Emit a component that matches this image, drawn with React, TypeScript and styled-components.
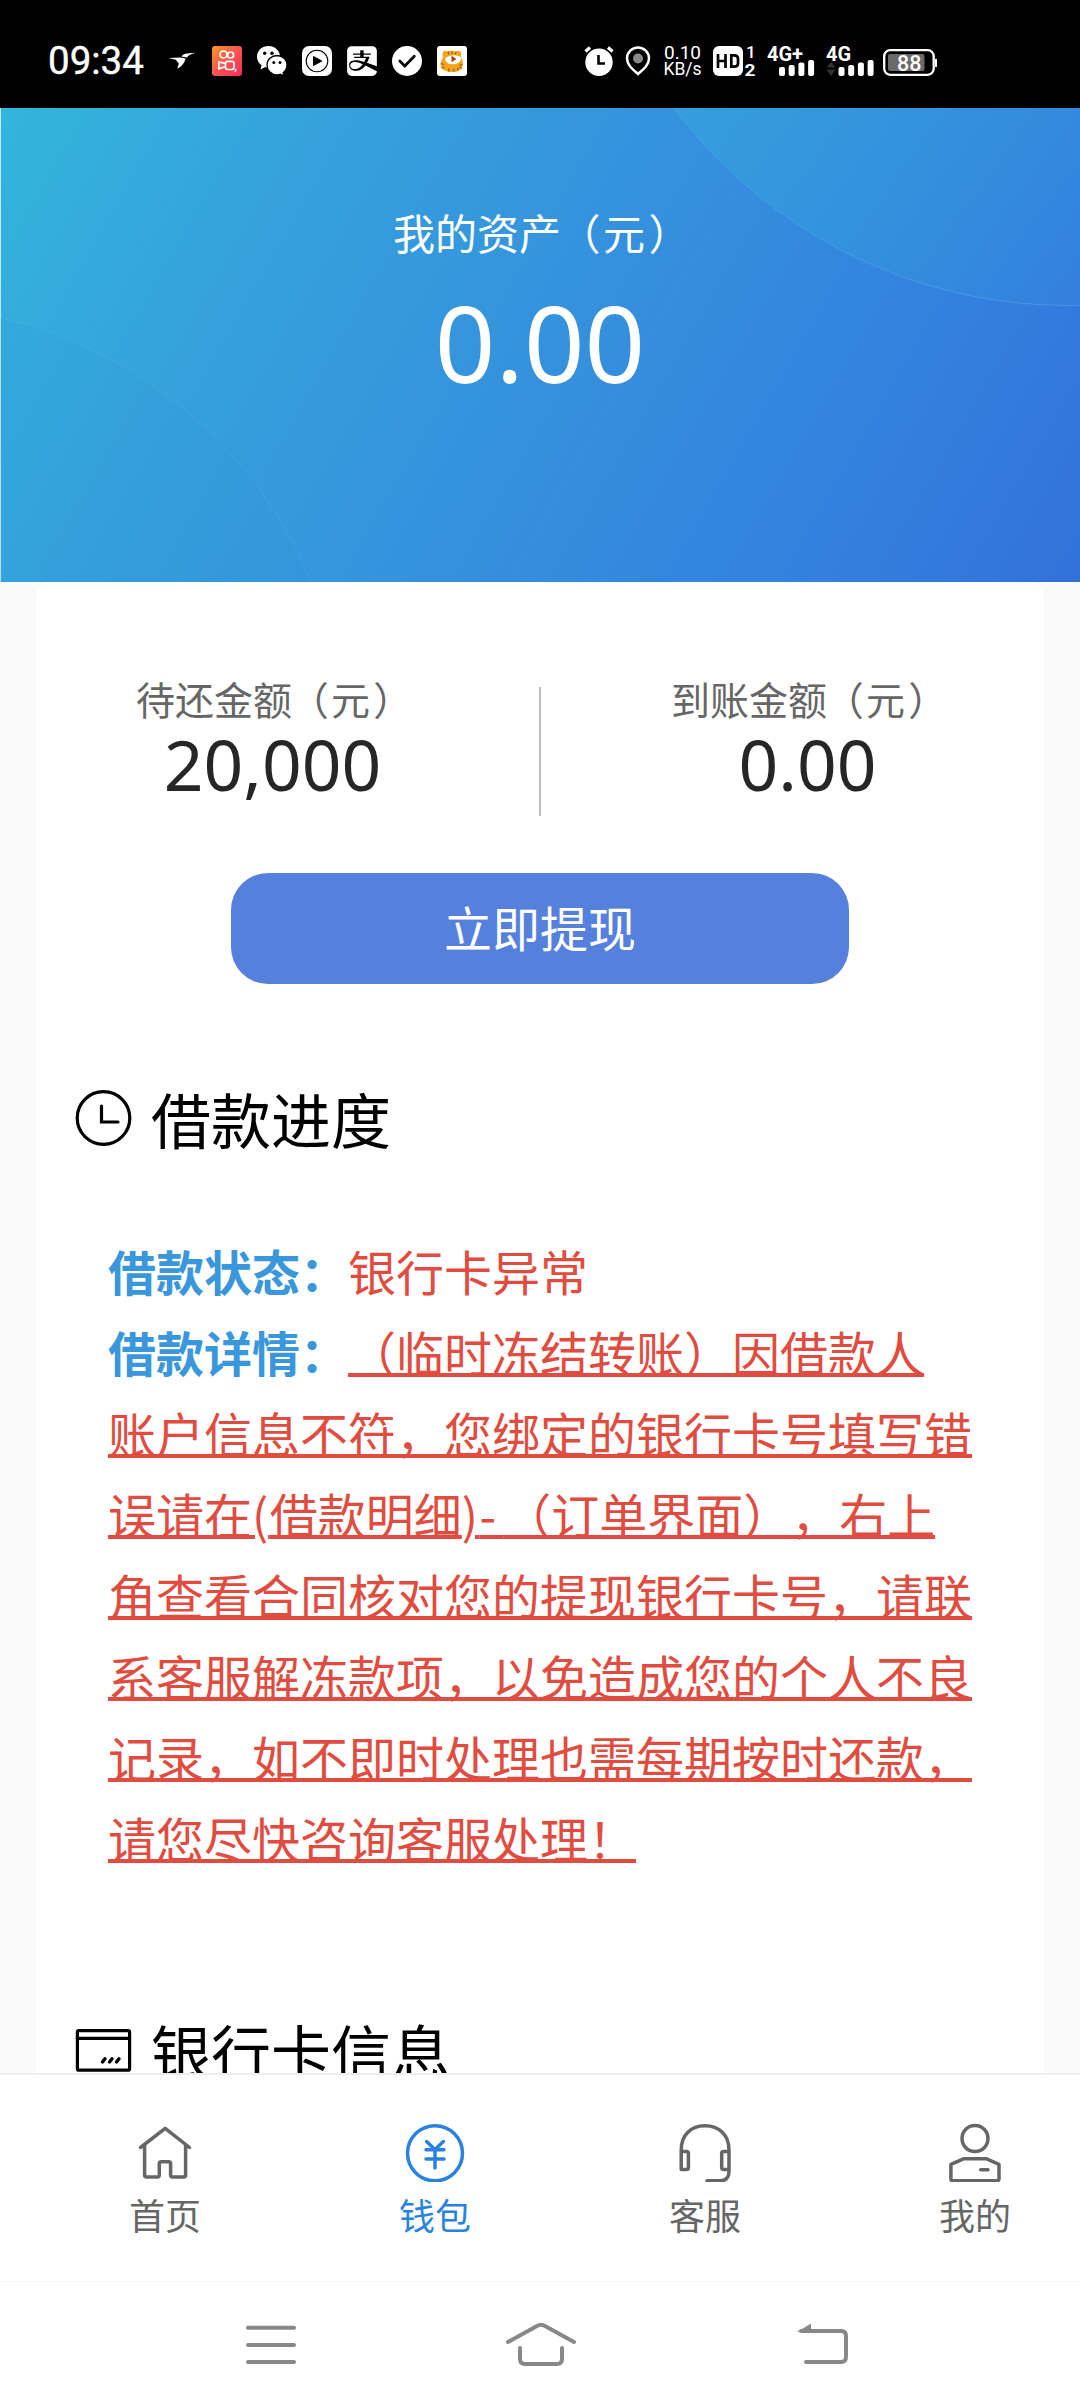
import React from "react";
import styled, { createGlobalStyle } from "styled-components";
import { FaAlipay } from "react-icons/fa";

const GlobalStyle = createGlobalStyle`
  * { box-sizing: border-box; }
  body {
    margin: 0;
    background: #fff;
    font-family: "Noto Sans", "Noto Sans CJK SC", sans-serif;
    text-spacing-trim: space-all;
  }
  svg { display: block; flex: none; }
`;

const cjk = `"Noto Sans CJK SC", "Noto Sans", sans-serif`;

const Screen = styled.div`
  display: flex;
  flex-direction: column;
  width: 1080px;
  height: 2408px;
  overflow: hidden;
  background: #fff;
`;

/* ---------- Status bar ---------- */

const StatusBar = styled.header`
  display: flex;
  flex: none;
  align-items: center;
  height: 108px;
  padding: 14px 0 0 48px;
  background: #000;
  color: #fff;
`;

const Clock = styled.div`
  width: 98px;
  font: 400 38.5px/40px Roboto, sans-serif;
  -webkit-text-stroke: 0.4px #fff;
  white-space: nowrap;
`;

const AppIcons = styled.div`
  display: flex;
  align-items: center;
  gap: 15px;
  margin-left: 21px;
`;

const AppIcon = styled.div`
  display: flex;
  align-items: center;
  justify-content: center;
  width: 30px;
  height: 30px;
`;

const SystemIcons = styled.div`
  display: flex;
  align-items: center;
  margin-left: 117px;
  height: 32px;
`;

const NetSpeed = styled.div`
  display: flex;
  flex-direction: column;
  align-items: center;
  width: 35px;
  margin: 0 13px 0 14px;
  font: 400 17.5px/16px Roboto, sans-serif;
  white-space: nowrap;
`;

const Rate = styled.span`
  font-size: 19px;
`;

const Signal = styled.svg<{ $gap: number }>`
  margin-left: ${(p) => p.$gap}px;
  overflow: visible;
  font-family: Roboto, sans-serif;
`;

/* ---------- Hero ---------- */

const Scroll = styled.main`
  flex: none;
  height: 1965px;
  overflow: hidden;
  background: #fafafa;
`;

const Hero = styled.section`
  position: relative;
  z-index: 1;
  display: flex;
  flex-direction: column;
  align-items: center;
  height: 474px;
  padding-top: 94px;
  background: linear-gradient(120deg, #33b5dc 0%, #35a0dc 26%, #3592dd 50%, #3381de 79%, #3371da 100%);
  box-shadow: inset 1px 0 #c4e8f4;
  color: #fff;
`;

const HeroArt = styled.svg`
  position: absolute;
  inset: 0;
`;

const HeroTitle = styled.div`
  position: relative;
  width: 294px;
  font: 400 42px/60px ${cjk};
  white-space: nowrap;
`;

const HeroAmount = styled.div`
  position: relative;
  margin-top: 20px;
  font-size: 106px;
  line-height: 120px;
`;

const Open = styled.span`
  margin: 0 0.06em 0 -0.06em;
`;

const Close = styled.span`
  margin: 0 -0.08em 0 0.08em;
`;

/* ---------- Card ---------- */

const Card = styled.section`
  width: 1008px;
  height: 1600px;
  margin: -10px auto 0;
  padding-top: 99px;
  border-radius: 30px;
  background: #fff;
`;

const Stats = styled.div`
  display: grid;
  grid-template-columns: 1fr 2px 1fr;
  width: 1068px;
  height: 145px;
  margin: 0 -30px;
`;

const Stat = styled.div`
  display: flex;
  flex-direction: column;
  align-items: center;
`;

const StatLabel = styled.div`
  width: 273px;
  font: 400 39px/54px ${cjk};
  color: #666;
  white-space: nowrap;
`;

const StatValue = styled.div`
  margin-top: 3px;
  font-size: 69.5px;
  line-height: 72px;
  color: #262626;
`;

const Divider = styled.div`
  height: 129px;
  margin-top: 16px;
  background: #bfbfbf;
`;

const WithdrawButton = styled.button`
  display: block;
  width: 618px;
  height: 111px;
  margin: 57px auto 0;
  padding: 0 0 4px;
  border: 0;
  border-radius: 37px;
  background: #5580db;
  color: #fff;
  font: 400 48px/107px ${cjk};
`;

const SectionHead = styled.div<{ $top: number }>`
  display: flex;
  align-items: center;
  gap: 19px;
  height: 60px;
  margin-top: ${(p) => p.$top}px;
  padding-left: 39px;
  color: #000;
  font: 400 60px/60px ${cjk};
  white-space: nowrap;
`;

const SectionTitle = styled.span`
  padding-bottom: 4px;
`;

const Detail = styled.div`
  margin: 80px 0 0 72px;
  color: #e04c40;
  font: 400 48px/81px ${cjk};
  white-space: nowrap;
`;

const Term = styled.b`
  color: #3a97db;
  font-weight: 700;
`;

const Notice = styled.span`
  text-decoration: underline;
  text-decoration-thickness: 4px;
  text-underline-offset: 1px;
`;

const Latin = styled.span<{ $space: number }>`
  letter-spacing: ${(p) => p.$space}px;
`;

/* ---------- Tab bar ---------- */

const TabBar = styled.nav`
  display: grid;
  flex: none;
  grid-template-columns: repeat(4, 270px);
  height: 208px;
  padding-left: 30px;
  border-top: 2px solid #eee;
  background: #fff;
`;

const Tab = styled.div<{ $active?: boolean }>`
  display: flex;
  flex-direction: column;
  align-items: center;
  padding-top: 47px;
  color: ${(p) => (p.$active ? "#2a82e0" : "#666")};
  font: 400 36px/50px ${cjk};
`;

const TabLabel = styled.span`
  margin-top: 7px;
`;

const TabSvg = styled.svg.attrs({
  width: 60,
  height: 60,
  viewBox: "0 0 60 60",
  fill: "none",
  stroke: "currentColor",
  strokeWidth: 3.5,
  strokeLinecap: "round",
  strokeLinejoin: "round",
})``;

const NavBar = styled.footer`
  display: flex;
  flex: none;
  align-items: flex-start;
  justify-content: space-between;
  height: 127px;
  padding: 38px 228px 0 241px;
  border-top: 1px solid #f5f5f5;
  background: #fff;
`;

const NavSvg = styled.svg.attrs({
  height: 50,
  fill: "none",
  stroke: "#888",
  strokeWidth: 4,
  strokeLinecap: "round",
  strokeLinejoin: "round",
})``;

/* ---------- Icons ---------- */

const BirdIcon = () => (
  <svg width="30" height="30" viewBox="0 0 30 30" fill="#fff">
    <path d="M1.500 12 13.500 11.600 18.500 12.500C18 16 15 20.500 10.300 22.700L11.800 17.500 8.800 13.800Z" />
    <path d="M14.500 10.500C16 8 19 7.200 28.500 6.800 24 8.200 21.500 9 20 11.500Z" />
  </svg>
);

const KuaishouIcon = () => (
  <svg width="30" height="30" viewBox="0 0 30 30" fill="none" stroke="#fff" strokeWidth="1.700">
    <defs>
      <linearGradient id="ks" x1="0" y1="0" x2="1" y2="1">
        <stop offset="0" stopColor="#f99a25" />
        <stop offset=".45" stopColor="#fb5a4e" />
        <stop offset="1" stopColor="#fb2a5c" />
      </linearGradient>
    </defs>
    <rect width="30" height="30" rx="3" fill="url(#ks)" stroke="none" />
    <circle cx="11.500" cy="8.500" r="3.500" />
    <circle cx="18.600" cy="9" r="3" />
    <rect x="13.500" y="15.300" width="8.500" height="8.200" rx="2.200" />
    <path d="M13 17.300 6.800 16v6.800l6.200-2" />
    <path d="M23.800 22.800q.3 2-1.100 3" strokeWidth="1.400" />
  </svg>
);

const WechatIcon = () => (
  <svg width="30" height="30" viewBox="0 0 30 30">
    <path d="M11.500 0C5 0 0 4.700 0 10.800c0 3.400 1.700 6.400 4.500 8.400L3.600 23.400 8.300 21q1.600.5 3.200.5C18 21.500 23 16.800 23 10.800S18 0 11.500 0Z" fill="#fff" />
    <path d="M20 9.500c-5.600 0-10 4.100-10 9.500s4.400 9.800 10 9.800q1.800 0 3.300-.5l3.600 1.800-.8-3.400C28.500 24.800 30 22.200 30 19c0-5.400-4.400-9.500-10-9.500Z" fill="#fff" stroke="#000" strokeWidth="1.300" />
    <circle cx="7.700" cy="7.200" r="1.700" />
    <circle cx="15" cy="7.200" r="1.700" />
    <circle cx="16.800" cy="16.500" r="1.500" />
    <circle cx="23" cy="16.500" r="1.500" />
  </svg>
);

const PlayIcon = () => (
  <svg width="30" height="30" viewBox="0 0 30 30">
    <rect width="30" height="30" rx="7" fill="#fff" />
    <circle cx="15" cy="15" r="10.800" fill="none" stroke="#000" strokeWidth="1.100" />
    <path d="M11.500 10.500v9L19.800 15Z" fill="#000" stroke="#000" strokeLinejoin="round" />
  </svg>
);

const CheckIcon = () => (
  <svg width="30" height="30" viewBox="0 0 30 30">
    <circle cx="15" cy="15" r="15" fill="#fff" />
    <path d="m7.800 15 5 5L22.300 10.300" fill="none" stroke="#000" strokeWidth="2.700" strokeLinecap="round" />
  </svg>
);

const TigerIcon = () => (
  <svg width="30" height="30" viewBox="0 0 30 30">
    <rect width="30" height="30" rx="3" fill="#fff" />
    <path d="M6 12C4.500 6 7 3.500 10 5.500c3-1 6-1 8.500 0C22 3.500 25 5 24 10c1.500 3 2.500 7 1.500 11-1.500 3.500-5 5-10 5S5 24.500 3.800 20.500C3 17.500 4 14.500 6 12Z" fill="#f3a51d" />
    <path d="m11 5.500.8 3m3.200-3v3m4-2.500-.8 2.500M4 17.500l3 1m-2.500 3.500 3-1m18-2.500-3 .8m2.500 3-3-1m-10.500 4.200.7-3m5 3-.6-3m4.600 1.800-1-2.300" stroke="#a45a12" strokeWidth="1.200" />
    <path d="M8 13c3-4.500 13-5 16.500-1.200-.5 3.700-3.500 6.400-8.300 6.400S9 16.500 8 13Z" fill="#fff" />
    <path d="M14.500 9.800v6.400l5-3.200Z" fill="#9a4412" />
  </svg>
);

const AlarmIcon = () => (
  <svg width="30" height="32" viewBox="0 0 30 32">
    <circle cx="15" cy="17.300" r="13.700" fill="#fff" />
    <path d="M1.500 6.500 6 2.500M28.500 6.500 24 2.500" stroke="#fff" strokeWidth="3.200" />
    <path d="M14.500 10v8.500H21" fill="none" stroke="#000" strokeWidth="2.600" />
  </svg>
);

const PinSvg = styled.svg`
  margin-left: 11px;
`;

const PinIcon = () => (
  <PinSvg width="26" height="32" viewBox="0 0 26 32">
    <path d="M13 29C8 24.500 2 20 2 13.500a11 11 0 0 1 22 0C24 20 18 24.500 13 29Z" fill="none" stroke="#fff" strokeWidth="2.500" />
    <circle cx="13" cy="13.500" r="5" fill="#888" />
  </PinSvg>
);

const HdSvg = styled.svg`
  overflow: visible;
  font-family: Roboto, sans-serif;
`;

const HdIcon = () => (
  <HdSvg width="44" height="32" viewBox="0 0 44 32">
    <rect y="1" width="30" height="30" rx="6" fill="#fff" />
    <path d="M5 9v14M12.500 9v14M5 16h7.500M18.300 10.300v11.400h2.700q4 0 4-3.200v-5q0-3.200-4-3.200Z" fill="none" stroke="#000" strokeWidth="2.700" />
    <text x="33" y="13" fontSize="17" fontWeight="500" fill="#fff">1</text>
    <text x="31.500" y="31" fontSize="17" fontWeight="700" textLength="11" lengthAdjust="spacingAndGlyphs" fill="#fff">2</text>
  </HdSvg>
);

const Bars = ({ x }: { x: number }) => (
  <g fill="#fff">
    {[9, 11, 13.5, 16].map((h, i) => (
      <rect key={h} x={x + i * 9.7} y={31 - h} width="6" height={h} rx="2" />
    ))}
  </g>
);

const BatterySvg = styled.svg`
  margin-left: 7px;
  font-family: Roboto, sans-serif;
`;

const Status = () => (
  <StatusBar>
    <Clock>09:34</Clock>
    <AppIcons>
      <AppIcon><BirdIcon /></AppIcon>
      <AppIcon><KuaishouIcon /></AppIcon>
      <AppIcon><WechatIcon /></AppIcon>
      <AppIcon><PlayIcon /></AppIcon>
      <AppIcon><FaAlipay size={34} /></AppIcon>
      <AppIcon><CheckIcon /></AppIcon>
      <AppIcon><TigerIcon /></AppIcon>
    </AppIcons>
    <SystemIcons>
      <AlarmIcon />
      <PinIcon />
      <NetSpeed>
        <Rate>0.10</Rate>
        <span>KB/s</span>
      </NetSpeed>
      <HdIcon />
      <Signal $gap={9} width="50" height="32" viewBox="0 0 50 32">
        <text x="1" y="15.500" fontSize="20" fontWeight="700" fill="#fff">4G+</text>
        <Bars x={13} />
      </Signal>
      <Signal $gap={10} width="50" height="32" viewBox="0 0 50 32">
        <text x="0" y="15.500" fontSize="20" fontWeight="700" fill="#fff">4G</text>
        <path d="M0.500 22.500 5 17l4.500 5.500ZM.5 24.500h9L5 31Z" fill="#333" />
        <Bars x={12.5} />
      </Signal>
      <BatterySvg width="55" height="32" viewBox="0 0 55 32">
        <rect x="1.200" y="5.200" width="49.500" height="24.600" rx="6" fill="none" stroke="#fff" strokeWidth="2.300" />
        <rect x="5" y="9" width="36.500" height="17" rx="2" fill="#6a6a6a" />
        <path d="M53 14v8" stroke="#fff" strokeWidth="2" />
        <text x="14" y="25.500" fontSize="21.500" fontWeight="500" fill="#fff">88</text>
      </BatterySvg>
    </SystemIcons>
  </StatusBar>
);

const TimeIcon = () => (
  <svg width="57" height="60" viewBox="0 0 57 60" fill="none" stroke="#000" strokeWidth="3.200" strokeLinecap="round">
    <circle cx="28.500" cy="28" r="26.300" />
    <path d="M26.500 16v16H43" />
  </svg>
);

const CardIcon = () => (
  <svg width="57" height="60" viewBox="0 0 57 60" fill="none" stroke="#000" strokeWidth="3.200" strokeLinecap="round">
    <rect x="2.400" y="8.600" width="52.200" height="39.600" rx="1.500" />
    <path d="M2.500 16.300h52" />
    <path d="m27.500 40 2.500-3.200m4.500 3.200 2.500-3.200m4.500 3.200 2.500-3.200" strokeWidth="3.400" />
  </svg>
);

const Yuan = () => (
  <>
    <Open>（</Open>元<Close>）</Close>
  </>
);

export default function App() {
  return (
    <Screen>
      <GlobalStyle />
      <Status />
      <Scroll>
        <Hero>
          <HeroArt width="1080" height="474" viewBox="0 0 1080 474">
            <defs>
              <linearGradient id="orb" x1="0.2" y1="0.500" x2="0.7" y2="1">
                <stop offset="0" stopColor="#35b3dc" stopOpacity=".45" />
                <stop offset="1" stopColor="#35b3dc" stopOpacity="0" />
              </linearGradient>
              <linearGradient id="rim" x1="0" y1="0.500" x2="0.6" y2="1">
                <stop offset="0" stopColor="#7fc8f0" stopOpacity=".1" />
                <stop offset="1" stopColor="#7fc8f0" stopOpacity=".3" />
              </linearGradient>
            </defs>
            <circle cx="1068" cy="-294.500" r="492" fill="url(#orb)" stroke="url(#rim)" />
            <circle cx="-99" cy="641" r="442.400" fill="#3590dc" fillOpacity=".1" stroke="#7fc8f0" strokeOpacity=".15" />
          </HeroArt>
          <HeroTitle>我的资产<Yuan /></HeroTitle>
          <HeroAmount>0.00</HeroAmount>
        </Hero>
        <Card>
          <Stats>
            <Stat>
              <StatLabel>待还金额<Yuan /></StatLabel>
              <StatValue>20,000</StatValue>
            </Stat>
            <Divider />
            <Stat>
              <StatLabel>到账金额<Yuan /></StatLabel>
              <StatValue>0.00</StatValue>
            </Stat>
          </Stats>
          <WithdrawButton>立即提现</WithdrawButton>
          <SectionHead $top={106}>
            <TimeIcon />
            <SectionTitle>借款进度</SectionTitle>
          </SectionHead>
          <Detail>
            <Term>借款状态：</Term>银行卡异常
            <br />
            <Term>借款详情：</Term>
            <Notice>
              （临时冻结转账）因借款人
              <br />
              账户信息不符，您绑定的银行卡号填写错
              <br />
              误请在<Latin $space={1.5}>(</Latin>借款明细<Latin $space={1.5}>)</Latin><Latin $space={7}>-</Latin>（订单界面），右上
              <br />
              角查看合同核对您的提现银行卡号，请联
              <br />
              系客服解冻款项，以免造成您的个人不良
              <br />
              记录，如不即时处理也需每期按时还款，
              <br />
              请您尽快咨询客服处理！
            </Notice>
          </Detail>
          <SectionHead $top={144}>
            <CardIcon />
            <SectionTitle>银行卡信息</SectionTitle>
          </SectionHead>
        </Card>
      </Scroll>
      <TabBar>
        <Tab>
          <TabSvg>
            <path d="M5.500 25.500 30.200 6.300 54.500 25.500M9.600 23v30q0 2 2 2h10.700q2 0 2-2V41.800q0-2 2-2h7.300q2 0 2 2V53q0 2 2 2h11q2 0 2-2V23" />
          </TabSvg>
          <TabLabel>首页</TabLabel>
        </Tab>
        <Tab $active>
          <TabSvg>
            <circle cx="30" cy="31.300" r="27.500" />
            <path d="m21.600 19.500 8.400 8 8.400-8M21 27.700h18M21 36.900h18M30 27.500v18.500" />
          </TabSvg>
          <TabLabel>钱包</TabLabel>
        </Tab>
        <Tab>
          <TabSvg>
            <path d="M6.200 47.600V28C6.200 13 16 3.800 30 3.800S54 13 54 28v21.500q0 9.200-9 9.200H32M6.200 29.400h5.200q2 0 2 2v14.200q0 2-2 2H6.200M54 29.400h-5.300q-2 0-2 2v14.200q0 2 2 2H54" />
          </TabSvg>
          <TabLabel>客服</TabLabel>
        </Tab>
        <Tab>
          <TabSvg>
            <circle cx="30" cy="16.500" r="13" />
            <path d="M19 36.700h22L54 42.300V57q0 1.700-1.700 1.700H7.600q-1.700 0-1.700-1.700V42.300ZM35.700 47.700H43" />
          </TabSvg>
          <TabLabel>我的</TabLabel>
        </Tab>
      </TabBar>
      <NavBar>
        <NavSvg width="60" viewBox="0 0 60 50">
          <path d="M7 7.700h46M7 25h46M7 42h46" />
        </NavSvg>
        <NavSvg width="87" viewBox="0 0 87 50">
          <path d="M5 22 34 6q4-2.500 8 0L71 22M17 28v11q0 5 5 5h32q5 0 5-5V28" />
        </NavSvg>
        <NavSvg width="60" viewBox="0 0 60 50">
          <path d="M14 42h35q5 0 5-5V16q0-5-5-5H9" />
          <path d="M5 12 19 3.500V12Z" fill="#888" stroke="none" />
        </NavSvg>
      </NavBar>
    </Screen>
  );
}
